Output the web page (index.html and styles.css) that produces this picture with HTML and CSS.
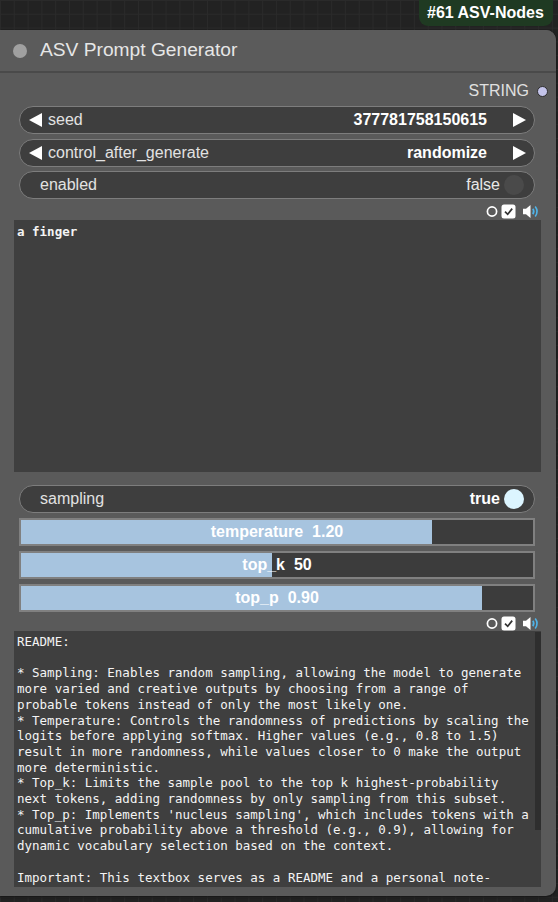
FILE: index.html
```html
<!DOCTYPE html>
<html>
<head>
<meta charset="utf-8">
<link rel="stylesheet" href="styles.css">
</head>
<body>
<div class="canvas">
  <div class="badge">#61 ASV-Nodes</div>
  <div class="node">
    <div class="title-bar">
      <span class="title-dot"></span>
      <span class="title-text">ASV Prompt Generator</span>
    </div>
    <div class="node-body">
      <div class="output-row">
        <span class="output-label">STRING</span>
        <span class="output-dot"></span>
      </div>
      <div class="widgets">
        <div class="pill combo">
          <span class="arrow-left"></span>
          <span class="pill-label">seed</span>
          <span class="pill-value bold">377781758150615</span>
          <span class="arrow-right"></span>
        </div>
        <div class="pill combo">
          <span class="arrow-left"></span>
          <span class="pill-label">control_after_generate</span>
          <span class="pill-value bold">randomize</span>
          <span class="arrow-right"></span>
        </div>
        <div class="pill toggle">
          <span class="pill-label">enabled</span>
          <span class="pill-value">false</span>
          <span class="knob off"></span>
        </div>
      </div>
      <div class="icon-row">
        <svg width="56" height="17" viewBox="0 0 56 17">
          <circle cx="6" cy="8.5" r="4.6" fill="none" stroke="#fff" stroke-width="1.7"/>
          <rect x="15.5" y="1.5" width="14" height="14" rx="2.5" fill="#fff"/>
          <path d="M19 8.6 L21.7 11.3 L26.2 5.6" fill="none" stroke="#333" stroke-width="1.7"/>
          <path d="M37 5.8 H40 L44.5 2 V15 L40 11.2 H37 Z" fill="#fff"/>
          <path d="M46.8 5.8 Q48.8 8.5 46.8 11.2" fill="none" stroke="#4fb3e8" stroke-width="1.6"/>
          <path d="M49.2 3.6 Q53 8.5 49.2 13.4" fill="none" stroke="#4fb3e8" stroke-width="1.6"/>
        </svg>
      </div>
      <div class="textbox prompt">a finger</div>
      <div class="widgets lower">
        <div class="pill toggle">
          <span class="pill-label">sampling</span>
          <span class="pill-value bold">true</span>
          <span class="knob on"></span>
        </div>
        <div class="slider">
          <div class="slider-fill" style="width:80.2%"></div>
          <span class="slider-text">temperature  1.20</span>
        </div>
        <div class="slider">
          <div class="slider-fill" style="width:49%"></div>
          <span class="slider-text">top_k  50</span>
        </div>
        <div class="slider">
          <div class="slider-fill" style="width:90%"></div>
          <span class="slider-text">top_p  0.90</span>
        </div>
      </div>
      <div class="icon-row second">
        <svg width="56" height="17" viewBox="0 0 56 17">
          <circle cx="6" cy="8.5" r="4.6" fill="none" stroke="#fff" stroke-width="1.7"/>
          <rect x="15.5" y="1.5" width="14" height="14" rx="2.5" fill="#fff"/>
          <path d="M19 8.6 L21.7 11.3 L26.2 5.6" fill="none" stroke="#333" stroke-width="1.7"/>
          <path d="M37 5.8 H40 L44.5 2 V15 L40 11.2 H37 Z" fill="#fff"/>
          <path d="M46.8 5.8 Q48.8 8.5 46.8 11.2" fill="none" stroke="#4fb3e8" stroke-width="1.6"/>
          <path d="M49.2 3.6 Q53 8.5 49.2 13.4" fill="none" stroke="#4fb3e8" stroke-width="1.6"/>
        </svg>
      </div>
      <div class="textbox readme">
<div class="readme-text">README:

* Sampling: Enables random sampling, allowing the model to generate
more varied and creative outputs by choosing from a range of
probable tokens instead of only the most likely one.
* Temperature: Controls the randomness of predictions by scaling the
logits before applying softmax. Higher values (e.g., 0.8 to 1.5)
result in more randomness, while values closer to 0 make the output
more deterministic.
* Top_k: Limits the sample pool to the top k highest-probability
next tokens, adding randomness by only sampling from this subset.
* Top_p: Implements 'nucleus sampling', which includes tokens with a
cumulative probability above a threshold (e.g., 0.9), allowing for
dynamic vocabulary selection based on the context.

Important: This textbox serves as a README and a personal note-</div>
        <div class="scroll-thumb"></div>
      </div>
    </div>
  </div>
</div>
</body>
</html>
```

FILE: styles.css
```css
html, body {
  margin: 0;
  padding: 0;
  width: 558px;
  height: 902px;
  overflow: hidden;
}
body {
  background-color: #222222;
  background-image:
    linear-gradient(to right, #2a2a2a 1px, transparent 1px),
    linear-gradient(to bottom, #2a2a2a 1px, transparent 1px);
  background-size: 13.8px 13.8px;
  font-family: "Liberation Sans", Arial, sans-serif;
  color: #ddd;
}
.canvas {
  position: relative;
  width: 558px;
  height: 902px;
  padding-top: 30px;
  box-sizing: border-box;
}
.badge {
  position: absolute;
  top: -8px;
  left: 419px;
  width: 134px;
  height: 34px;
  box-sizing: border-box;
  padding: 13px 0 0 8px;
  background: #1f3a22;
  border-radius: 9px;
  color: #fff;
  font-weight: bold;
  font-size: 16px;
  line-height: 16px;
  z-index: 2;
}
.node {
  margin-left: -10px;
  width: 566px;
  height: 866px;
  background: #5a5a5a;
  border-radius: 10px;
  box-shadow: 0 1px 3px rgba(0,0,0,0.5);
  display: flex;
  flex-direction: column;
  overflow: hidden;
}
.title-bar {
  height: 41px;
  display: flex;
  align-items: center;
  background: #5b5b5b;
  border-bottom: 2px solid #4a4a4a;
  padding-left: 23px;
  flex: none;
}
.title-dot {
  width: 14px;
  height: 14px;
  border-radius: 50%;
  background: #a0a0a0;
  margin-right: 13px;
}
.title-text {
  font-size: 19.2px;
  color: #e6e6e6;
  position: relative;
  top: -1px;
}
.node-body {
  padding-left: 24px;
  padding-right: 15px;
  display: flex;
  flex-direction: column;
}
.output-row {
  height: 32px;
  display: flex;
  align-items: center;
  justify-content: flex-end;
  padding-top: 4px;
  box-sizing: border-box;
  margin-right: -7px;
}
.output-label {
  font-size: 16px;
  color: #e0e0e0;
  margin-right: 8px;
}
.output-dot {
  width: 11px;
  height: 11px;
  border-radius: 50%;
  background: #c4c4ea;
  border: 1.5px solid #2e2e2e;
  box-sizing: border-box;
}
.widgets {
  padding: 0 6px 0 5px;
  display: flex;
  flex-direction: column;
  gap: 4.5px;
  margin-top: 1px;
}
.pill {
  height: 28px;
  box-sizing: border-box;
  border: 1.5px solid #7d7d7d;
  border-radius: 14px;
  background: #3e3e3e;
  display: flex;
  align-items: center;
  font-size: 16px;
  color: #e2e2e2;
}
.combo {
  padding: 0 8px 0 9px;
}
.toggle {
  padding: 0 10px 0 20px;
}
.arrow-left {
  width: 0;
  height: 0;
  border-top: 7px solid transparent;
  border-bottom: 7px solid transparent;
  border-right: 13px solid #fff;
  margin-right: 6px;
}
.arrow-right {
  width: 0;
  height: 0;
  border-top: 7px solid transparent;
  border-bottom: 7px solid transparent;
  border-left: 13px solid #fff;
  margin-left: 26px;
}
.pill-label {
  flex: 1;
  white-space: nowrap;
}
.pill-value {
  white-space: nowrap;
  color: #e8e8e8;
}
.bold {
  font-weight: bold;
  color: #fff;
}
.knob {
  width: 20px;
  height: 20px;
  border-radius: 50%;
  margin-left: 4px;
}
.knob.off {
  background: #4a4a4a;
}
.knob.on {
  background: #dcf5ff;
}
.icon-row {
  height: 17px;
  display: flex;
  justify-content: flex-end;
  margin-top: 4px;
  margin-right: -1px;
}
.icon-row.second {
  margin-top: 3px;
}
.textbox {
  background: #3f3f3f;
  font-family: "DejaVu Sans Mono", "Liberation Mono", monospace;
  font-size: 12.5px;
  color: #f4f4f4;
  box-sizing: border-box;
}
.prompt {
  height: 252px;
  margin-top: 0;
  padding: 4px 3px;
  line-height: 15.7px;
  font-weight: bold;
}
.widgets.lower {
  margin-top: 13px;
}
.slider {
  position: relative;
  height: 28px;
  box-sizing: border-box;
  border: 2px solid #808080;
  background: #3c3c3c;
  display: flex;
  align-items: center;
  justify-content: center;
  margin-top: 0.5px;
}
.slider-fill {
  position: absolute;
  left: 0;
  top: 0;
  bottom: 0;
  background: #a7c4df;
}
.slider-text {
  position: relative;
  font-size: 16px;
  font-weight: bold;
  color: #fff;
  white-space: pre;
}
.readme {
  position: relative;
  height: 256px;
  margin-top: -1px;
  padding: 3px 3px;
  overflow: hidden;
}
.readme-text {
  white-space: pre;
  line-height: 15.7px;
}
.scroll-thumb {
  position: absolute;
  right: 0;
  top: 1px;
  width: 6px;
  height: 198px;
  background: #2e2e2e;
}
```
